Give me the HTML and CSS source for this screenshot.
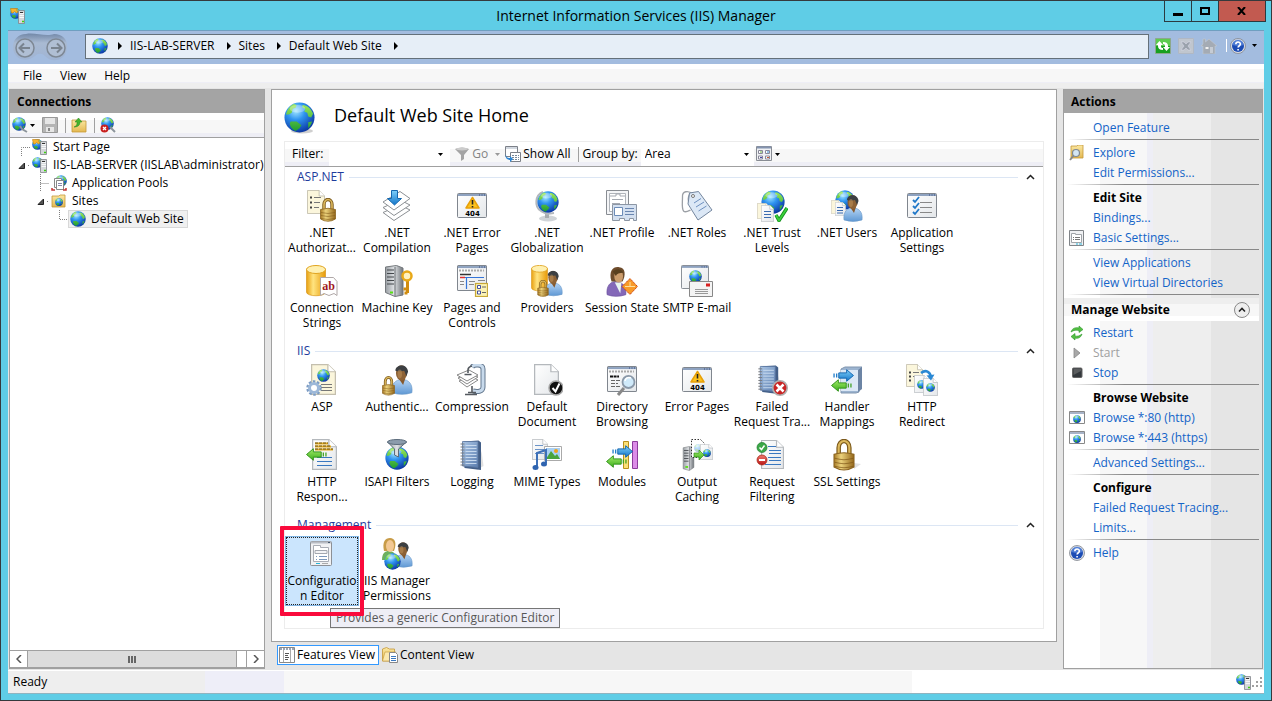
FILE: index.html
```html
<!DOCTYPE html>
<html lang="en">
<head>
    <meta charset="UTF-8">
    <meta name="viewport" content="width=device-width, initial-scale=1.0">
    <title>Internet Information Services (IIS) Manager</title>
    <link rel="stylesheet" href="styles.css">
</head>
<body>

    <!-- Icon definitions -->
    <svg class="sprite" aria-hidden="true">
        <defs>
            <radialGradient id="gGlobe" cx="38%" cy="28%" r="75%">
                <stop offset="0" stop-color="#a4e8ff"/><stop offset=".4" stop-color="#2f94f0"/><stop offset="1" stop-color="#0a34a0"/>
            </radialGradient>
            <linearGradient id="gLand" x1="0" y1="0" x2="0" y2="1">
                <stop offset="0" stop-color="#9ae85a"/><stop offset="1" stop-color="#1f9c30"/>
            </linearGradient>
            <linearGradient id="gGold" x1="0" y1="0" x2="1" y2="0">
                <stop offset="0" stop-color="#a87a24"/><stop offset=".35" stop-color="#ecd27c"/><stop offset="1" stop-color="#94671a"/>
            </linearGradient>
            <linearGradient id="gDb" x1="0" y1="0" x2="1" y2="0">
                <stop offset="0" stop-color="#e8a010"/><stop offset=".35" stop-color="#ffe480"/><stop offset="1" stop-color="#e89a08"/>
            </linearGradient>
            <linearGradient id="gTower" x1="0" y1="0" x2="1" y2="0">
                <stop offset="0" stop-color="#9a9fa4"/><stop offset=".5" stop-color="#dfe2e5"/><stop offset="1" stop-color="#70757a"/>
            </linearGradient>
            <linearGradient id="gBlue" x1="0" y1="0" x2="0" y2="1">
                <stop offset="0" stop-color="#7fd0fa"/><stop offset="1" stop-color="#1274c8"/>
            </linearGradient>
            <linearGradient id="gGreen" x1="0" y1="0" x2="0" y2="1">
                <stop offset="0" stop-color="#a4ec6a"/><stop offset="1" stop-color="#3cae1c"/>
            </linearGradient>
            <linearGradient id="gShirt" x1="0" y1="0" x2="0" y2="1">
                <stop offset="0" stop-color="#b4d4f4"/><stop offset="1" stop-color="#5f98d4"/>
            </linearGradient>
            <linearGradient id="gBook" x1="0" y1="0" x2="1" y2="1">
                <stop offset="0" stop-color="#a9c4e4"/><stop offset="1" stop-color="#5c7fb0"/>
            </linearGradient>
            <linearGradient id="gFolder" x1="0" y1="0" x2="0" y2="1">
                <stop offset="0" stop-color="#fbe9a4"/><stop offset="1" stop-color="#e4b850"/>
            </linearGradient>
            <linearGradient id="gRed" x1="0" y1="0" x2="0" y2="1">
                <stop offset="0" stop-color="#f07a70"/><stop offset="1" stop-color="#b81414"/>
            </linearGradient>
            <linearGradient id="gPage" x1="0" y1="0" x2="1" y2="1">
                <stop offset="0" stop-color="#ffffff"/><stop offset="1" stop-color="#e4e7ea"/>
            </linearGradient>
            <linearGradient id="gNav" x1="0" y1="0" x2="0" y2="1">
                <stop offset="0" stop-color="#7288a8"/><stop offset=".35" stop-color="#a9bad2"/><stop offset="1" stop-color="#9fb4d4"/>
            </linearGradient>
        </defs>

        <!-- shared parts -->
        <symbol id="globe" viewBox="0 0 32 32">
            <circle cx="16" cy="16" r="15.500" fill="url(#gGlobe)"/>
            <path d="M2 13C3 8 6 4 10 2l3 1-1 3-3 1-1 4-3 2zM19 3c5 0 9 4 11 9l-2 4-3-1-1-4-3-1 1-3-3-1zM7 20l6 0 5 4-2 3-4 3c-4-2-6-5-6-8zM25 21l4-1c-1 3-2 5-4 7z" fill="url(#gLand)"/>
            <ellipse cx="14" cy="7" rx="8" ry="4" fill="#fff" opacity=".3"/>
        </symbol>
        <symbol id="page" viewBox="0 0 20 26" preserveAspectRatio="none">
            <path d="M.5.5h13l6 6v19H.5z" fill="url(#gPage)" stroke="#b4b8bc"/>
            <path d="M13.500.5v6h6" fill="#fff" stroke="#b4b8bc"/>
        </symbol>
        <symbol id="cream" viewBox="0 0 20 26" preserveAspectRatio="none">
            <path d="M.5.5h13l6 6v19H.5z" fill="#fbf6dc" stroke="#c4bfae"/>
            <path d="M13.500.5v6h6" fill="#fff" stroke="#c4bfae"/>
        </symbol>
        <symbol id="lock" viewBox="0 0 16 24">
            <path d="M4 12V6.500a4 5 0 0 1 8 0V12" fill="none" stroke="#7c5a1c" stroke-width="3.400"/>
            <path d="M4 12V6.500a4 5 0 0 1 8 0V12" fill="none" stroke="#dcb85c" stroke-width="1.600"/>
            <path d="M.5 11.500Q8 9 15.500 11.500V21Q8 25.500.5 21z" fill="url(#gGold)" stroke="#8c6420" stroke-width=".8"/>
            <path d="M1 14.500q7 2 14 0M1 17.500q7 2 14 0M1 20.500q7 2 14 0" fill="none" stroke="#80591a" stroke-width=".8" opacity=".7"/>
        </symbol>
        <symbol id="user" viewBox="0 0 20 28">
            <path d="M1 26c-1-8 3-12 9-12s10 4 9 12q-9 3-18 0z" fill="url(#gShirt)" stroke="#6a98c8" stroke-width=".6"/>
            <path d="M7 13h6l-2 6z" fill="#86592e"/>
            <ellipse cx="9.500" cy="8" rx="5" ry="7" fill="#8d6236"/>
            <path d="M4 6C4 0 15-1 15.500 7l-1.500 4-2-5q-5 1-8 0z" fill="#3c3f42"/>
            <ellipse cx="8" cy="9" rx="2" ry="4" fill="#c4965c" opacity=".5"/>
        </symbol>
        <symbol id="woman" viewBox="0 0 20 28">
            <path d="M1 26c-1-8 3-12 8-12s10 4 9 12q-9 3-17 0z" fill="#8468b8" stroke="#6a509c" stroke-width=".6"/>
            <path d="M8 15h6l-1 10z" fill="#e8f4f0"/>
            <path d="M5 14C2 4 7 0 12 1c6 0 6 8 3 13z" fill="#6e4c2c"/>
            <ellipse cx="11.500" cy="9" rx="4" ry="6" fill="#cb9c6c"/>
            <path d="M6 5q6-5 10 1-6 0-7 3z" fill="#59401f"/>
        </symbol>
        <symbol id="window" viewBox="0 0 30 25" preserveAspectRatio="none">
            <rect x=".5" y=".5" width="29" height="24" rx="1" fill="url(#gPage)" stroke="#80868e"/>
            <path d="M1 1h28v2H1z" fill="#8ea2c0"/>
            <path d="M22 2h1m1.500 0h1m1.500 0h1" stroke="#34487a"/>
        </symbol>
        <symbol id="arrow-r" viewBox="0 0 20 12">
            <path d="M1 4v4M3.500 4v4" stroke="#1a78c8" stroke-width="1.200"/>
            <path d="M5.500 3.500H13v-3L19.500 6 13 11.500v-3H5.500z" fill="url(#gBlue)" stroke="#0f64b0" stroke-width=".9"/>
        </symbol>
        <symbol id="arrow-l" viewBox="0 0 20 12">
            <path d="M19 4v4M16.500 4v4" stroke="#3fa020" stroke-width="1.200"/>
            <path d="M14.500 3.500H7v-3L.5 6 7 11.500v-3h7.500z" fill="url(#gGreen)" stroke="#2f9218" stroke-width=".9"/>
        </symbol>
        <symbol id="tower" viewBox="0 0 14 28">
            <path d="M1 2l7-1.500L13 2v22l-5 3.500-7-2z" fill="url(#gTower)" stroke="#74787c" stroke-width=".6"/>
            <path d="M8 1v26" stroke="#686c70" stroke-width=".7"/>
            <path d="M2 5h5M2 8h5M2 11h5M2 14h5M2 17h5" stroke="#44484c"/>
            <path d="M3.500 23.500h3" stroke="#56e010" stroke-width="2"/>
        </symbol>
        <symbol id="book" viewBox="0 0 24 32">
            <path d="M22 12l2 15-7 4z" fill="#999" opacity=".3"/>
            <path d="M4 2.500l15-1 2.500 2V31L5 29z" fill="#435f88"/>
            <path d="M3 2.500h15.500v26L3 27z" fill="url(#gBook)" stroke="#5a76a0" stroke-width=".8"/>
            <path d="M6 6.500h11M6 9.500h11M6 12.500h11M6 15.500h11M6 18.500h11M6 21.500h11M6 24.500h11" stroke="#cfe0f2" stroke-width=".9"/>
            <path d="M1 5h4M1 8h4M1 11h4M1 14h4M1 17h4M1 20h4M1 23h4M1 26h4" stroke="#777a7e"/>
        </symbol>
        <symbol id="server" viewBox="0 0 16 16">
            <use href="#globe" x="0" y="0" width="11" height="11"/>
            <path d="M8.500 2.500h6v13h-6z" fill="#d4d7da" stroke="#80848a" stroke-width=".8"/>
            <path d="M9.500 5.500H14M9.500 7.500H14M9.500 9.500H14" stroke="#fff" stroke-width=".8"/>
            <path d="M10 4.500h3" stroke="#333"/>
            <path d="M12 13.500h2" stroke="#3ed010" stroke-width="1.500"/>
        </symbol>
        <symbol id="start" viewBox="0 0 16 16">
            <use href="#server" width="16" height="16"/>
            <path d="M.5.5h7L6.500 2 8 4 6.500 5 4.500 3.500 3 5H1.500z" fill="#f7b42c" stroke="#c07808" stroke-width=".6"/>
        </symbol>
        <symbol id="help" viewBox="0 0 16 16">
            <circle cx="8" cy="8" r="7.500" fill="#d8dce4" stroke="#80858e" stroke-width=".8"/>
            <circle cx="8" cy="8" r="6" fill="#1c4cb4"/>
            <path d="M2.500 7a5.500 5.500 0 0 1 11 0q-5 2-11 0z" fill="#6c9ae8" opacity=".6"/>
            <path d="M5.800 6.300c0-3 4.600-3 4.600-.2 0 1.700-2.300 1.600-2.300 3.500M8.100 11v1.600" fill="none" stroke="#fff" stroke-width="1.600"/>
        </symbol>
        <symbol id="site-window" viewBox="0 0 16 14">
            <path d="M.5.5h15v12H.5z" fill="#fff" stroke="#888"/>
            <path d="M1 1h14v2H1z" fill="#a8b4c8"/>
            <use href="#globe" x="4" y="4" width="8" height="8"/>
        </symbol>

        <!-- feature icons -->
        <symbol id="f-auth-rules" viewBox="0 0 32 32">
            <use href="#cream" x="1" y="0" width="18" height="24"/>
            <path d="M4 7.500h2M4 12.500h2M4 17.500h2" stroke="#444" stroke-width="2"/>
            <path d="M8 7.500h7M8 12.500h6M8 17.500h5" stroke="#777"/>
            <use href="#lock" x="14" y="8" width="16" height="24"/>
        </symbol>
        <symbol id="f-compile" viewBox="0 0 32 32">
            <g fill="#fff" stroke="#8c9094">
                <path d="M2 22.500l17-7.500 10 5-16 10.500z"/>
                <path d="M2 17.500l17-7.500 10 5-16 10.500z"/>
                <path d="M2 12L19 1.500l10 7L13 20z"/>
            </g>
            <path d="M10.500.5h6v8h4L13.500 15l-7-6.500h4z" fill="url(#gBlue)" stroke="#1568b0"/>
        </symbol>
        <symbol id="f-404" viewBox="0 0 32 32">
            <use href="#window" x="1" y="3" width="30" height="25"/>
            <path d="M16.500 7.500L23 18H10z" fill="#fcc21c" stroke="#e8a008" stroke-linejoin="round" stroke-width="1.500"/>
            <path d="M16.500 10v4.500M16.500 16v1.500" stroke="#222" stroke-width="1.600"/>
        </symbol>
        <symbol id="f-global" viewBox="0 0 32 32">
            <ellipse cx="17" cy="28.500" rx="9" ry="3" fill="#d0d4d8"/>
            <path d="M14 23h4v5h-4z" fill="#a8acb0"/>
            <path d="M12 2C4 5 3 17 10 21l6 3 7-1" fill="none" stroke="#b4b8bc" stroke-width="2"/>
            <use href="#globe" x="6" y="1" width="22" height="22"/>
        </symbol>
        <symbol id="f-profile" viewBox="0 0 32 32">
            <path d="M.5.5h22v24H.5z" fill="#f4f5f7" stroke="#888c92"/>
            <path d="M3.500 3.500h16v18h-16z" fill="#fff" stroke="#b0b4ba"/>
            <path d="M4 6h6V4h4v2h5M6 9.500h11M6 13.500h8" fill="none" stroke="#a4a8b0"/>
            <path d="M6.500 14.500h24v16h-3v-2h-4v2h-5v-2h-5v2h-7z" fill="#d4e0f0" stroke="#8c96a4"/>
            <path d="M8.500 17.500h8v8h-8z" fill="#fff" stroke="#6c8cb8"/>
            <path d="M19 18.500h9M19 21.500h9M19 24.500h9" stroke="#6a86b0"/>
        </symbol>
        <symbol id="f-roles" viewBox="0 0 32 32">
            <path d="M12 4C7 0 1 1 1.500 7c0 6-1 11 1 14 2 2 5 0 7-1M12 4C9 1 6 7 8 13" fill="none" stroke="#9ca0a6" stroke-width="1.300"/>
            <path d="M8.500 3l9-1.500L31 20 17 30 7 14z" fill="#dce8f6" stroke="#74869e"/>
            <circle cx="12" cy="6" r="1.500" fill="#fff" stroke="#777"/>
            <path d="M13 13l7-4.500M15 17l8-5M17.500 21l8-5" stroke="#6e90c0"/>
        </symbol>
        <symbol id="f-trust" viewBox="0 0 32 32">
            <use href="#globe" x="5" y="0" width="24" height="24"/>
            <use href="#cream" x="1" y="13" width="13" height="16"/>
            <use href="#page" x="5" y="15" width="13" height="17"/>
            <path d="M8 21.500h7M8 24.500h7M8 27.500h7" stroke="#3a6cb0"/>
            <path d="M20 25l3 5.500L31 18" fill="none" stroke="#12901c" stroke-width="3.500"/>
            <path d="M20 25l3 5.500L31 18" fill="none" stroke="#3cd03c" stroke-width="1.800"/>
        </symbol>
        <symbol id="f-users" viewBox="0 0 32 32">
            <use href="#globe" x="4" y="0" width="20" height="20"/>
            <use href="#cream" x="0" y="10" width="11" height="14"/>
            <use href="#page" x="4" y="12" width="11" height="14"/>
            <path d="M6 17.500h6M6 20.500h6M6 23h6" stroke="#3a6cb0"/>
            <use href="#user" x="12" y="4" width="20" height="28"/>
        </symbol>
        <symbol id="f-appset" viewBox="0 0 32 32">
            <use href="#window" x="1" y="3" width="30" height="25"/>
            <path d="M7 10l2 2 4-5M7 16l2 2 4-5M7 22l2 2 4-5" fill="none" stroke="#2078c8" stroke-width="1.800"/>
            <path d="M14 12.500h12M14 17.500h12M14 22.500h12" stroke="#888"/>
        </symbol>
        <symbol id="db" viewBox="0 0 20 32">
            <path d="M.5 4v23c0 5 19 5 19 0V4z" fill="url(#gDb)" stroke="#d48c08" stroke-width=".6"/>
            <ellipse cx="10" cy="4.500" rx="9.500" ry="4" fill="#fff0b0" stroke="#e0a420"/>
        </symbol>
        <symbol id="f-conn" viewBox="0 0 32 32">
            <use href="#db" x="0" y="0" width="20" height="32"/>
            <path d="M14.500 12.500h13l3.500 4v14l-3-2-5 2-5-2-3.500 2z" fill="#fff" stroke="#b0a8a8"/>
        </symbol>
        <symbol id="f-key" viewBox="0 0 32 32">
            <path d="M4.500 2l11-1.500L22 3v27l-8 1.500-9.500-4z" fill="url(#gTower)" stroke="#74787c"/>
            <path d="M14 2v29" stroke="#686c70"/>
            <path d="M6 5h7M6 8.500h7M6 12h7M6 15.500h7M6 19h7" stroke="#44484c" stroke-width="1.200"/>
            <path d="M9 27.500h3" stroke="#56e010" stroke-width="2"/>
            <path d="M26.500 15v13M26.500 24h-4M26.500 28h-3" fill="none" stroke="#d08c10" stroke-width="3"/>
            <circle cx="26" cy="11" r="4.500" fill="#fff2c0" stroke="#e8a818" stroke-width="2.500"/>
        </symbol>
        <symbol id="f-pages" viewBox="0 0 32 32">
            <use href="#window" x="1" y="0" width="30" height="26"/>
            <path d="M3 5.500h25" stroke="#aaa" stroke-width="2" stroke-dasharray="2 1"/>
            <path d="M4 9.500h11" stroke="#333" stroke-width="1.500"/>
            <path d="M4 12.500h24M10.500 13v11" stroke="#3474d8" stroke-width="1.200"/>
            <path d="M4 12.500h5" stroke="#e03030" stroke-width="1.500"/>
            <path d="M4 16.500h4M4 19.500h4M13 16.500h6M13 19.500h5M22 15.500h7" stroke="#888"/>
            <rect x="19.500" y="18.500" width="12" height="13" fill="#fbf2b4" stroke="#c8a838" stroke-width="1.200"/>
            <path d="M21.500 20.500h3v3h-3zM21.500 26h3v3h-3z" fill="#fff" stroke="#4450a0"/>
            <path d="M26 22h4M26 27.500h4" stroke="#666"/>
        </symbol>
        <symbol id="f-providers" viewBox="0 0 32 32">
            <use href="#db" x="0" y="0" width="17" height="27"/>
            <use href="#user" x="13" y="4" width="19" height="28"/>
            <use href="#lock" x="6" y="15" width="12" height="17"/>
        </symbol>
        <symbol id="f-session" viewBox="0 0 32 32">
            <use href="#woman" x="0" y="1" width="22" height="31"/>
            <path d="M24 13.500l7.500 8-7.500 8-8-8z" fill="#f89a28" stroke="#c83c10" stroke-dasharray="1.500 .7"/>
            <path d="M19 21.500h10M24 17v4" stroke="#ffe0a0"/>
        </symbol>
        <symbol id="f-smtp" viewBox="0 0 32 32">
            <use href="#window" x="0" y="0" width="28" height="24"/>
            <use href="#globe" x="8" y="5" width="13" height="13"/>
            <path d="M8.500 16.500h23v15h-23z" fill="#f4f4f4" stroke="#888"/>
            <path d="M25 18.500h4v3h-4z" fill="#d82020"/>
            <path d="M14 24.500h13M14 26.500h13M14 28.500h13" stroke="#999"/>
        </symbol>
        <symbol id="f-asp" viewBox="0 0 32 32">
            <use href="#cream" x="5" y="0" width="25" height="31"/>
            <use href="#globe" x="11" y="5" width="13" height="13"/>
            <path d="M15 20.500h11M15 23.500h11M15 26.500h11" stroke="#777" stroke-width="1.200"/>
            <circle cx="8" cy="24" r="6.500" fill="none" stroke="#7c9cc4" stroke-width="2.500" stroke-dasharray="2.500 1.600"/>
            <circle cx="8" cy="24" r="4.500" fill="#fff" stroke="#9db8d8" stroke-width="3"/>
        </symbol>
        <symbol id="f-authn" viewBox="0 0 32 32">
            <use href="#user" x="10" y="0" width="22" height="31"/>
            <use href="#lock" x="1" y="12" width="13" height="20"/>
        </symbol>
        <symbol id="f-compress" viewBox="0 0 32 32">
            <path d="M16 3c2-3 11-3 11 2v18c0 5-6 5-10 4" fill="none" stroke="#64788e" stroke-width="5"/>
            <path d="M16 3c2-3 11-3 11 2v18c0 5-6 5-10 4" fill="none" stroke="#c8daec" stroke-width="3"/>
            <g fill="#fff" stroke="#888">
                <path d="M3 17l11-5 8 4-11 7z"/>
                <path d="M2 14l12-5 8 4-11 7z"/>
                <path d="M1 11l12-5 9 5-11 6z"/>
            </g>
            <path d="M16 2q-4 1-4 4v3M8.500 10.500h7M16 22v7M9 30.500h12M12 28.500h8" fill="none" stroke="#555a60" stroke-width="1.600"/>
        </symbol>
        <symbol id="f-default" viewBox="0 0 32 32">
            <use href="#page" x="3" y="0" width="25" height="31"/>
            <circle cx="25" cy="24" r="7" fill="#111" stroke="#a8a8a8" stroke-width="1.500"/>
            <path d="M21.500 24l3 3.500 4-8" fill="none" stroke="#fff" stroke-width="2"/>
        </symbol>
        <symbol id="f-browse" viewBox="0 0 32 32">
            <use href="#window" x="1" y="2" width="30" height="26"/>
            <path d="M3 7.500h25" stroke="#a8a8a8" stroke-width="2" stroke-dasharray="2 1"/>
            <path d="M4 12.500h9" stroke="#111" stroke-width="2" stroke-dasharray="3 .6"/>
            <path d="M5 16.500h9M5 19.500h7M5 22.500h9" stroke="#666" stroke-dasharray="4 1"/>
            <path d="M18 24l-6 7" stroke="#888" stroke-width="3"/>
            <circle cx="22.500" cy="18" r="6" fill="#d0eafa" stroke="#8a98a8" stroke-width="1.800"/>
            <path d="M19 17a4 4 0 0 1 6-3" fill="none" stroke="#fff" stroke-width="1.500"/>
        </symbol>
        <symbol id="f-failed" viewBox="0 0 32 32">
            <use href="#book" x="1" y="0" width="24" height="31"/>
            <circle cx="24" cy="24" r="7.200" fill="#c82424" stroke="#b0b0b0" stroke-width="1.600"/>
            <path d="M20.500 20.500l7 7M27.500 20.500l-7 7" stroke="#fff" stroke-width="2.500"/>
        </symbol>
        <symbol id="f-handler" viewBox="0 0 32 32">
            <path d="M10 5l4-2h17l-3 3v22l-3 1H10z" fill="#9cb4d0" stroke="#8096b0"/>
            <path d="M10 6h17v21H10z" fill="#dce8f6"/>
            <path d="M27 6l4-3v22l-4 3z" fill="#6c84a4"/>
            <use href="#arrow-r" x="2" y="5" width="21" height="13"/>
            <use href="#arrow-l" x="0" y="15" width="21" height="13"/>
        </symbol>
        <symbol id="f-redirect" viewBox="0 0 32 32">
            <use href="#cream" x="0" y="0" width="17" height="23"/>
            <path d="M3 8.500h2M3 12.500h2M3 16.500h2" stroke="#444" stroke-width="2"/>
            <path d="M7 8.500h6M7 12.500h3" stroke="#777"/>
            <use href="#page" x="8" y="11" width="15" height="18"/>
            <use href="#globe" x="11" y="16" width="9" height="9"/>
            <use href="#page" x="17" y="14" width="15" height="18"/>
            <use href="#globe" x="20" y="19" width="9" height="9"/>
            <path d="M15 9c5-4 9-1 10 4" fill="none" stroke="#2a88d4" stroke-width="2.500"/>
            <path d="M20.500 11.500l8-1-3.500 6z" fill="#2a88d4"/>
        </symbol>
        <symbol id="f-response" viewBox="0 0 32 32">
            <use href="#page" x="6" y="0" width="25" height="31"/>
            <path d="M9 4.500h13M9 7.500h16M9 10.500h18" stroke="#e4ac20" stroke-width="2"/>
            <path d="M9 4h13M9 7h16M9 10h18" stroke="#4c3c10" stroke-dasharray="3 1" stroke-width=".8"/>
            <path d="M11 18.500h15M11 22.500h15M11 26.500h15" stroke="#3a78c0" stroke-width="1.200"/>
            <use href="#arrow-l" x="0" y="9" width="21" height="13"/>
        </symbol>
        <symbol id="f-isapi" viewBox="0 0 32 32">
            <use href="#globe" x="4" y="7" width="24" height="24"/>
            <path d="M6.500 3l7 7v6l4 2v-8l8-7z" fill="url(#gTower)" stroke="#5c6c7c"/>
            <ellipse cx="16" cy="3" rx="9.500" ry="2.500" fill="#8c9cac" stroke="#5c6c7c"/>
        </symbol>
        <symbol id="f-logging" viewBox="0 0 32 32">
            <use href="#book" x="3" y="0" width="25" height="32"/>
        </symbol>
        <symbol id="f-mime" viewBox="0 0 32 32">
            <use href="#page" x="1" y="0" width="16" height="21"/>
            <path d="M4 6.500h8M4 10.500h10M4 14.500h9" stroke="#6c94c8"/>
            <path d="M13.500 7.500h17v14h-17z" fill="#fff" stroke="#aaa"/>
            <path d="M15 9h14v11H15z" fill="#a8d0f4"/>
            <path d="M15 20l5-8 4 5 2-2 3 5z" fill="#48a43c"/>
            <circle cx="25" cy="12" r="2" fill="#f0a018"/>
            <path d="M6 28V14l9-3v13" fill="none" stroke="#3c70b8" stroke-width="2"/>
            <ellipse cx="4.500" cy="28.500" rx="3" ry="2.500" fill="#2f64b0"/>
            <ellipse cx="13" cy="25" rx="3" ry="2.500" fill="#2f64b0"/>
        </symbol>
        <symbol id="f-modules" viewBox="0 0 32 32">
            <path d="M17.500 2.500h5v27h-5z" fill="#fbe078" stroke="#b8901c"/>
            <path d="M26.500 2.500h5v27h-5z" fill="#dc8ce8" stroke="#8c3c9c"/>
            <use href="#arrow-r" x="6" y="6" width="21" height="13"/>
            <use href="#arrow-l" x="0" y="16" width="21" height="13"/>
        </symbol>
        <symbol id="f-caching" viewBox="0 0 32 32">
            <use href="#tower" x="0" y="7" width="15" height="25"/>
            <path d="M10.500.5h9l4 4v14h-13z" fill="#fff" stroke="#333" stroke-dasharray="1.500 1.500"/>
            <use href="#globe" x="13" y="5" width="8" height="8" opacity=".35"/>
            <use href="#page" x="19" y="5" width="13" height="16"/>
            <use href="#globe" x="22" y="10" width="8" height="8"/>
            <path d="M13 14h5v-3l5 5-5 5v-3h-5z" fill="url(#gGreen)" stroke="#2f9218" stroke-width=".7"/>
        </symbol>
        <symbol id="f-filter" viewBox="0 0 32 32">
            <use href="#page" x="5" y="1" width="23" height="29"/>
            <path d="M12 7.500h8M13 11.500h12M13 14.500h12M12 18.500h13M13 21.500h12M9 25.500h16" stroke="#3a78c0" stroke-width="1.200"/>
            <circle cx="6" cy="8.500" r="5" fill="#3ca848" stroke="#1c7c2c" stroke-width=".7"/>
            <path d="M3.500 8.500l2 2 3-4" fill="none" stroke="#fff" stroke-width="1.500"/>
            <circle cx="6" cy="21" r="5" fill="url(#gRed)" stroke="#a02010" stroke-width=".7"/>
            <path d="M3 21h6" stroke="#fff" stroke-width="2"/>
        </symbol>
        <symbol id="f-ssl" viewBox="0 0 32 32">
            <path d="M23 24l7 1-7 5z" fill="#999" opacity=".3"/>
            <use href="#lock" x="2" y="0" width="22" height="32"/>
        </symbol>
        <symbol id="f-config" viewBox="0 0 32 32">
            <rect x="4.500" y="3.500" width="21" height="24" rx="1" fill="#f0f1f3" stroke="#8c9096"/>
            <path d="M5 4.500h20" stroke="#b8bcc4" stroke-width="2"/>
            <path d="M22 4.500h2" stroke="#44586c"/>
            <path d="M7.500 7.500h7v2h8v14h-15z" fill="#fff" stroke="#a8acb4"/>
            <path d="M9 12.500h12v3H9z" fill="#f4f4f6" stroke="#a4a8b0"/>
            <path d="M10 18.500h1M13 18.500h8M10 21.500h1M13 21.500h8" stroke="#7c98bc"/>
            <path d="M10 25.500h4" stroke="#28b4d8"/><path d="M16 25.500h6" stroke="#aaa"/>
        </symbol>
        <symbol id="f-perms" viewBox="0 0 32 32">
            <use href="#user" x="13" y="3" width="19" height="27"/>
            <path d="M1 22c0-7 3-9 7-9s8 3 7 9z" fill="#6cb05c"/>
            <path d="M3 13C1 4 4 0 9 0s7 5 4 13z" fill="#c89c48"/>
            <ellipse cx="9" cy="8" rx="4" ry="6" fill="#f2c894"/>
            <use href="#globe" x="3" y="15" width="17" height="17"/>
        </symbol>
    </svg>

    <div class="window">
        <header class="titlebar">
            <svg class="icon16 app-icon"><use href="#start"/></svg>
            <h1 class="window-title">Internet Information Services (IIS) Manager</h1>
            <div class="window-buttons">
                <button class="win-btn" aria-label="Minimize"><svg width="10" height="10"><path d="M0 7h10v3H0z"/></svg></button>
                <button class="win-btn" aria-label="Maximize"><svg width="10" height="10"><path d="M1 2h8v6H1z" fill="none" stroke="#000" stroke-width="2"/></svg></button>
                <button class="win-btn win-close" aria-label="Close"><svg width="10" height="8"><path d="M1 0l7 8M8 0L1 8" stroke="#000" stroke-width="2"/></svg></button>
            </div>
        </header>

        <nav class="navbar" aria-label="Location">
            <svg class="history" viewBox="0 0 56 28">
                <path d="M14 1c8-2 20 3 28 0 9 0 14 6 13 14-1 14-16 15-22 8-3-3-7-3-10 0C15 30 1 27 1 14 1 7 6 1 14 1z" fill="url(#gNav)"/>
                <circle cx="13" cy="15" r="9" fill="#b0bfd4" stroke="#7e8894" stroke-width="1.500"/>
                <circle cx="44" cy="15" r="9" fill="#b0bfd4" stroke="#7e8894" stroke-width="1.500"/>
                <path d="M18 15H8m4-4.500L7.500 15l4.500 4.500M39 15h10m-4-4.500l4.500 4.500-4.500 4.500" fill="none" stroke="#79838f" stroke-width="2"/>
            </svg>
            <div class="address">
                <svg class="icon16"><use href="#globe"/></svg>
                <svg class="crumb-arrow" viewBox="0 0 4 8"><path d="M0 0l4 4-4 4z"/></svg>
                <a href="#">IIS-LAB-SERVER</a>
                <svg class="crumb-arrow" viewBox="0 0 4 8"><path d="M0 0l4 4-4 4z"/></svg>
                <a href="#">Sites</a>
                <svg class="crumb-arrow" viewBox="0 0 4 8"><path d="M0 0l4 4-4 4z"/></svg>
                <a href="#">Default Web Site</a>
                <svg class="crumb-arrow" viewBox="0 0 4 8"><path d="M0 0l4 4-4 4z"/></svg>
            </div>
            <div class="nav-tools">
                <button aria-label="Refresh"><svg class="icon16" viewBox="0 0 16 16"><path d="M.5.500h15v15H.5z" fill="#5ccc50" stroke="#8ca88c"/><path d="M1 8h14v7H1z" fill="#18a020"/><path d="M4.500 3L8 7H6v1.500q0 1.500 2 1.500v2q-5 0-5-4V7H1zM11.500 13L8 9h2V7.500Q10 6 8 6V4q5 0 5 4v1h2z" fill="#fff"/></svg></button>
                <button aria-label="Stop loading" disabled><svg class="icon16" viewBox="0 0 16 16"><path d="M.5.500h15v15H.5z" fill="#c0c6ce" stroke="#b0b8c4"/><path d="M3 4l3 0 2 2 2-2h3L10 8l3 4h-3L8 10l-2 2H3l3-4z" fill="#9aa2ac" stroke="#dde" stroke-width=".5"/></svg></button>
                <button aria-label="Home" disabled><svg class="icon16" viewBox="0 0 16 16"><path d="M2 1h2.500v3L8 1l8 7h-2v8H2V8H0l2-2z" fill="#a4abb4" stroke="#c4cad2" stroke-width=".6"/><path d="M4.500 9h3v2h-3z" fill="#f0f0f0"/><path d="M9 9h3v6H9z" fill="#c6ccd4"/></svg></button>
                <span class="nav-sep"></span>
                <button class="help-btn" aria-label="Help"><svg class="icon16"><use href="#help"/></svg><svg class="caret" viewBox="0 0 5 3"><path d="M0 0h5L2.500 3z"/></svg></button>
            </div>
        </nav>

        <nav class="menubar" aria-label="Menu">
            <button>File</button>
            <button>View</button>
            <button>Help</button>
        </nav>

        <div class="workspace">
            <section class="connections">
                <h2 class="pane-title">Connections</h2>
                <div class="conn-tools">
                    <button class="connect-btn" aria-label="Connect"><svg class="icon16" viewBox="0 0 16 16"><use href="#globe" width="14" height="14"/><path d="M8 9l2 3 5 3" fill="none" stroke="#8c949c" stroke-width="2"/></svg><svg class="caret" viewBox="0 0 5 3"><path d="M0 0h5L2.500 3z"/></svg></button>
                    <button aria-label="Save" disabled><svg class="icon16" viewBox="0 0 16 16"><path d="M.5.500h15v15H.5z" fill="#b4b4b4" stroke="#999"/><path d="M3 1h10v6H3zM4 10h8v5H4z" fill="#e6e6e6"/><path d="M6 11h2v3H6z" fill="#888"/></svg></button>
                    <span class="tool-sep"></span>
                    <button aria-label="Up"><svg class="icon16" viewBox="0 0 16 16"><path d="M1 3h5l1 1h8v11H1z" fill="url(#gFolder)" stroke="#c49838" stroke-width=".8"/><path d="M3 10c3-1 3-3 3-5H4l3.500-4L11 5H9c0 3-2 5-6 5z" fill="#44b42c" stroke="#24801c" stroke-width=".5"/></svg></button>
                    <span class="tool-sep"></span>
                    <button aria-label="Disconnect"><svg class="icon16" viewBox="0 0 16 16"><use href="#globe" x="1" width="13" height="13"/><path d="M10 10l5 5" stroke="#8c949c" stroke-width="2"/><circle cx="4.500" cy="11.500" r="4" fill="#c82020"/><path d="M3 10l3 3M6 10l-3 3" stroke="#fff" stroke-width="1.300"/></svg></button>
                </div>
                <ul class="tree">
                    <li class="tree-row level1">
                        <svg class="branch" viewBox="0 0 13 18"><path d="M4.500 18V9.500H13" class="dots"/></svg>
                        <span class="node"><svg class="icon16"><use href="#start"/></svg>Start Page</span>
                    </li>
                    <li class="tree-row level1">
                        <svg class="branch" viewBox="0 0 13 18"><path d="M7.500 7v5.500H2z" class="expander"/><path d="M11 9.500h2" class="dots"/></svg>
                        <span class="node"><svg class="icon16"><use href="#server"/></svg>IIS-LAB-SERVER (IISLAB\administrator)</span>
                    </li>
                    <li class="tree-row level2">
                        <svg class="branch" viewBox="0 0 13 18"><path d="M4.500 0v18M4.500 9.500H13" class="dots"/></svg>
                        <span class="node"><svg class="icon16" viewBox="0 0 16 16"><use href="#globe" x="4" y="0" width="12" height="12"/><path d="M3.500 3.500h7v9h-7z" fill="#fff" stroke="#888"/><path d="M5.500 5.500h7v9h-7z" fill="#fff" stroke="#888"/><path d="M7 8.500h4M7 10.500h4" stroke="#88a"/><path d="M1 13v2h3M12 15h3v-2" fill="none" stroke="#c43434" stroke-width="1.500"/></svg>Application Pools</span>
                    </li>
                    <li class="tree-row level2">
                        <svg class="branch" viewBox="0 0 13 18"><path d="M7.500 7v5.500H2z" class="expander"/><path d="M11 9.500h2" class="dots"/></svg>
                        <span class="node"><svg class="icon16" viewBox="0 0 16 16"><path d="M1 3h7l1-1h5v12H1z" fill="url(#gFolder)" stroke="#c49838" stroke-width=".8"/><use href="#globe" x="4" y="5" width="8" height="8"/></svg>Sites</span>
                    </li>
                    <li class="tree-row level3">
                        <svg class="branch" viewBox="0 0 13 18"><path d="M4.500 0v9.500H13" class="dots"/></svg>
                        <span class="node selected"><svg class="icon16"><use href="#globe"/></svg>Default Web Site</span>
                    </li>
                </ul>
                <div class="scrollbar">
                    <button aria-label="Scroll left"><svg width="6" height="8"><path d="M5 0L1 4l4 4" class="chev"/></svg></button>
                    <div class="track"><div class="thumb"><span></span><span></span><span></span></div></div>
                    <button aria-label="Scroll right"><svg width="6" height="8"><path d="M1 0l4 4-4 4" class="chev"/></svg></button>
                </div>
            </section>

            <main class="center">
                <div class="feature-page">
                    <div class="page-head">
                        <svg class="icon32" viewBox="0 0 32 32"><ellipse cx="18" cy="29" rx="11" ry="2.500" fill="#888" opacity=".4"/><use href="#globe" width="31" height="31"/></svg>
                        <h2>Default Web Site Home</h2>
                    </div>
                    <div class="feature-box">
                        <div class="filter-bar">
                            <label for="filter">Filter:</label>
                            <div class="combo filter-combo">
                                <input type="text" id="filter">
                                <svg class="caret" viewBox="0 0 5 3"><path d="M0 0h5L2.500 3z"/></svg>
                            </div>
                            <button class="go-btn" disabled><svg class="icon16" viewBox="0 0 16 16"><path d="M1 3q7-3 14 0l-5 6v4l-3 2V9z" fill="#a4a4a4"/><ellipse cx="8" cy="3" rx="6" ry="1.500" fill="#ccc"/></svg>Go<svg class="caret" viewBox="0 0 5 3"><path d="M0 0h5L2.500 3z" fill="#999"/></svg></button>
                            <button class="show-btn"><svg class="icon16" viewBox="0 0 16 16"><path d="M.5.500h12v10H.5z" fill="#fff" stroke="#7c8088"/><path d="M1 2h11" stroke="#a4b0c0"/><path d="M5.500 6.500h10v9h-10z" fill="#fff" stroke="#7c8088"/><path d="M7 9.500h7M7 11.500h7M7 13.500h7" stroke="#789" stroke-dasharray="2 1"/><path d="M1 8c0 3 1 4 4 4v-2l3 3-3 3v-2c-4 0-5-3-4-6z" fill="#2a84d4"/></svg>Show All</button>
                            <span class="tool-sep"></span>
                            <label for="groupby">Group by:</label>
                            <div class="combo group-combo">
                                <select id="groupby"><option>Area</option></select>
                                <svg class="caret" viewBox="0 0 5 3"><path d="M0 0h5L2.500 3z"/></svg>
                            </div>
                            <button class="view-btn" aria-label="View mode"><svg class="icon16" viewBox="0 0 16 16"><path d="M.5.500h15v14H.5z" fill="#f0f1f4" stroke="#888c94"/><path d="M1 1.500h14" stroke="#8494b0" stroke-width="2"/><path d="M2.500 4.500h4v3h-4zM9.500 4.500h4v3h-4zM2.500 10h4v3h-4zM9.500 10h4v3h-4z" fill="#fff" stroke="#889"/><path d="M4 6h2" stroke="#6a3"/><path d="M11 6h2" stroke="#38c"/><path d="M4 11.500h2" stroke="#44a"/><path d="M11 11.500h2" stroke="#c53"/></svg><svg class="caret" viewBox="0 0 5 3"><path d="M0 0h5L2.500 3z"/></svg></button>
                        </div>

                        <section class="group">
                            <div class="group-head"><h3>ASP.NET</h3><button aria-label="Collapse ASP.NET"><svg width="9" height="6"><path d="M1 5l3.500-3.500L8 5" class="collapse"/></svg></button></div>
                            <div class="tiles">
                                <button class="tile"><svg class="icon32"><use href="#f-auth-rules"/></svg><span>.NET<br>Authorizat...</span></button>
                                <button class="tile"><svg class="icon32"><use href="#f-compile"/></svg><span>.NET<br>Compilation</span></button>
                                <button class="tile"><svg class="icon32" viewBox="0 0 32 32"><use href="#f-404"/><text x="16.500" y="26" text-anchor="middle" class="svg-404">404</text></svg><span>.NET Error<br>Pages</span></button>
                                <button class="tile"><svg class="icon32"><use href="#f-global"/></svg><span>.NET<br>Globalization</span></button>
                                <button class="tile"><svg class="icon32"><use href="#f-profile"/></svg><span>.NET Profile</span></button>
                                <button class="tile"><svg class="icon32"><use href="#f-roles"/></svg><span>.NET Roles</span></button>
                                <button class="tile"><svg class="icon32"><use href="#f-trust"/></svg><span>.NET Trust<br>Levels</span></button>
                                <button class="tile"><svg class="icon32"><use href="#f-users"/></svg><span>.NET Users</span></button>
                                <button class="tile"><svg class="icon32"><use href="#f-appset"/></svg><span>Application<br>Settings</span></button>
                                <button class="tile"><svg class="icon32" viewBox="0 0 32 32"><use href="#f-conn"/><text x="22.500" y="25" text-anchor="middle" class="svg-ab">ab</text></svg><span>Connection<br>Strings</span></button>
                                <button class="tile"><svg class="icon32"><use href="#f-key"/></svg><span>Machine Key</span></button>
                                <button class="tile"><svg class="icon32"><use href="#f-pages"/></svg><span>Pages and<br>Controls</span></button>
                                <button class="tile"><svg class="icon32"><use href="#f-providers"/></svg><span>Providers</span></button>
                                <button class="tile"><svg class="icon32"><use href="#f-session"/></svg><span>Session State</span></button>
                                <button class="tile"><svg class="icon32"><use href="#f-smtp"/></svg><span>SMTP E-mail</span></button>
                            </div>
                        </section>

                        <section class="group">
                            <div class="group-head"><h3>IIS</h3><button aria-label="Collapse IIS"><svg width="9" height="6"><path d="M1 5l3.500-3.500L8 5" class="collapse"/></svg></button></div>
                            <div class="tiles">
                                <button class="tile"><svg class="icon32"><use href="#f-asp"/></svg><span>ASP</span></button>
                                <button class="tile"><svg class="icon32"><use href="#f-authn"/></svg><span>Authentic...</span></button>
                                <button class="tile"><svg class="icon32"><use href="#f-compress"/></svg><span>Compression</span></button>
                                <button class="tile"><svg class="icon32"><use href="#f-default"/></svg><span>Default<br>Document</span></button>
                                <button class="tile"><svg class="icon32"><use href="#f-browse"/></svg><span>Directory<br>Browsing</span></button>
                                <button class="tile"><svg class="icon32" viewBox="0 0 32 32"><use href="#f-404"/><text x="16.500" y="26" text-anchor="middle" class="svg-404">404</text></svg><span>Error Pages</span></button>
                                <button class="tile"><svg class="icon32"><use href="#f-failed"/></svg><span>Failed<br>Request Tra...</span></button>
                                <button class="tile"><svg class="icon32"><use href="#f-handler"/></svg><span>Handler<br>Mappings</span></button>
                                <button class="tile"><svg class="icon32"><use href="#f-redirect"/></svg><span>HTTP<br>Redirect</span></button>
                                <button class="tile"><svg class="icon32"><use href="#f-response"/></svg><span>HTTP<br>Respon...</span></button>
                                <button class="tile"><svg class="icon32"><use href="#f-isapi"/></svg><span>ISAPI Filters</span></button>
                                <button class="tile"><svg class="icon32"><use href="#f-logging"/></svg><span>Logging</span></button>
                                <button class="tile"><svg class="icon32"><use href="#f-mime"/></svg><span>MIME Types</span></button>
                                <button class="tile"><svg class="icon32"><use href="#f-modules"/></svg><span>Modules</span></button>
                                <button class="tile"><svg class="icon32"><use href="#f-caching"/></svg><span>Output<br>Caching</span></button>
                                <button class="tile"><svg class="icon32"><use href="#f-filter"/></svg><span>Request<br>Filtering</span></button>
                                <button class="tile"><svg class="icon32"><use href="#f-ssl"/></svg><span>SSL Settings</span></button>
                            </div>
                        </section>

                        <section class="group">
                            <div class="group-head"><h3>Management</h3><button aria-label="Collapse Management"><svg width="9" height="6"><path d="M1 5l3.500-3.500L8 5" class="collapse"/></svg></button></div>
                            <div class="tiles">
                                <div class="tile-wrap">
                                    <button class="tile tile-selected" aria-describedby="tip"><svg class="icon32"><use href="#f-config"/></svg><span>Configuratio<br>n Editor</span></button>
                                    <div class="tooltip" id="tip" role="tooltip">Provides a generic Configuration Editor</div>
                                    <div class="highlight"></div>
                                </div>
                                <button class="tile"><svg class="icon32"><use href="#f-perms"/></svg><span>IIS Manager<br>Permissions</span></button>
                            </div>
                        </section>
                    </div>
                </div>
                <div class="view-tabs">
                    <button class="tab active"><svg class="icon16" viewBox="0 0 16 16"><path d="M.5.500h15v15H.5z" fill="#fff" stroke="#888"/><path d="M1 2h14" stroke="#9aa4b4" stroke-width="2" stroke-dasharray="2 1"/><path d="M4.500 3v12M11.500 3v12" stroke="#aaa"/><path d="M6 6.500h4M6 8.500h3M6 10.500h4M6 12.500h3" stroke="#555"/></svg>Features View</button>
                    <button class="tab"><svg class="icon16" viewBox="0 0 16 16"><path d="M.5 2l4-1.500 3 1.500h5v12h-12z" fill="url(#gFolder)" stroke="#c49838" stroke-width=".8"/><path d="M3 5h11l-3 9H.5z" fill="#fbe9b0" stroke="#c49838" stroke-width=".6"/><path d="M7.500 5.500h6l2 2v8h-8z" fill="#fff" stroke="#888"/><path d="M9 9.500h5M9 11.500h5M9 13.500h5" stroke="#3a78c0"/></svg>Content View</button>
                </div>
            </main>

            <aside class="actions">
                <h2 class="pane-title">Actions</h2>
                <div class="action-list">
                    <a class="action" href="#">Open Feature</a>
                    <hr>
                    <a class="action" href="#"><svg class="icon16" viewBox="0 0 16 16"><path d="M2 1h6l1-1h5v13H2z" fill="url(#gFolder)" stroke="#c49838" stroke-width=".8"/><path d="M5 10l-4 5" stroke="#888" stroke-width="2"/><circle cx="7" cy="8" r="3.500" fill="#d4e6f4" stroke="#808890" stroke-width="1.200"/></svg>Explore</a>
                    <a class="action" href="#">Edit Permissions...</a>
                    <hr>
                    <h3 class="action">Edit Site</h3>
                    <a class="action" href="#">Bindings...</a>
                    <a class="action" href="#"><svg class="icon16" viewBox="0 0 16 16"><path d="M.5.500h14v15H.5z" fill="#f0f1f3" stroke="#808488"/><path d="M2.500 3.500h4v1h6v8h-10z" fill="#fff" stroke="#a0a4a8"/><path d="M4 7.500h1M6 7.500h5M4 9.500h1M6 9.500h5" stroke="#777"/><path d="M7 14h2M10 14h3" stroke="#28b4d8"/></svg>Basic Settings...</a>
                    <hr>
                    <a class="action" href="#">View Applications</a>
                    <a class="action" href="#">View Virtual Directories</a>
                    <hr>
                    <div class="section-head">
                        <h3>Manage Website</h3>
                        <button aria-label="Collapse Manage Website"><svg width="16" height="16"><circle cx="8" cy="8" r="7.500" fill="#eee" stroke="#888"/><path d="M5 9.500L8 6.500l3 3" fill="none" stroke="#222" stroke-width="1.600"/></svg></button>
                    </div>
                    <a class="action" href="#"><svg class="icon16" viewBox="0 0 16 16"><path d="M2 7c1-4 5-5 8-4V1l4 3.500-4 3V5.500C7 5 5 5 2 7z" fill="#54c044" stroke="#2c9428" stroke-width=".6"/><path d="M13 9c-1 4-5 5-7 4v2l-4-3.500 4-3V11c3 .5 4 0 7-2z" fill="#54c044" stroke="#2c9428" stroke-width=".6"/></svg>Restart</a>
                    <a class="action off" aria-disabled="true"><svg class="icon16" viewBox="0 0 16 16"><path d="M5 3l6 5-6 5z" fill="#a8a8a8" stroke="#888" stroke-width=".8"/></svg>Start</a>
                    <a class="action" href="#"><svg class="icon16" viewBox="0 0 16 16"><rect x="3.500" y="3" width="9.500" height="9.500" rx="1" fill="#34383c" stroke="#666"/><path d="M4.500 4h7.500v2l-7.500 4z" fill="#777" opacity=".6"/></svg>Stop</a>
                    <hr>
                    <h3 class="action">Browse Website</h3>
                    <a class="action" href="#"><svg class="icon16"><use href="#site-window"/></svg>Browse *:80 (http)</a>
                    <a class="action" href="#"><svg class="icon16"><use href="#site-window"/></svg>Browse *:443 (https)</a>
                    <hr>
                    <a class="action" href="#">Advanced Settings...</a>
                    <hr>
                    <h3 class="action">Configure</h3>
                    <a class="action" href="#">Failed Request Tracing...</a>
                    <a class="action" href="#">Limits...</a>
                    <hr>
                    <a class="action" href="#"><svg class="icon16"><use href="#help"/></svg>Help</a>
                </div>
            </aside>
        </div>

        <footer class="statusbar">
            <span>Ready</span>
            <div class="status-right">
                <svg class="icon16"><use href="#server"/></svg>
                <svg width="10" height="12"><path d="M8 1h2v2H8zM4 5h2v2H4zM8 5h2v2H8zM0 9h2v2H0zM4 9h2v2H4zM8 9h2v2H8z" fill="#a0a0a0"/></svg>
            </div>
        </footer>
    </div>

</body>
</html>
```

FILE: styles.css
```css
* {
    box-sizing: border-box;
}

body {
    margin: 0;
    font-family: "Open Sans", "Noto Sans", sans-serif;
    font-size: 12px;
    line-height: 14px;
    color: #000;
}

h1, h2, h3, ul {
    margin: 0;
    padding: 0;
    font-size: inherit;
    font-weight: normal;
}

button, input, select {
    font: inherit;
    color: inherit;
    margin: 0;
    padding: 0;
    border: none;
    background: none;
}

a {
    color: inherit;
    text-decoration: none;
}

svg {
    display: block;
    flex: none;
}

.sprite {
    position: absolute;
    width: 0;
    height: 0;
}

.icon16 {
    width: 16px;
    height: 16px;
}

.icon32 {
    width: 32px;
    height: 32px;
}

.caret {
    width: 5px;
    height: 3px;
}

.svg-404 {
    font: bold 7px "DejaVu Sans", sans-serif;
}

.svg-ab {
    font: bold 12px "Liberation Serif", serif;
    fill: #a01820;
}

/* window frame */
.window {
    display: flex;
    flex-direction: column;
    min-height: 100vh;
    padding: 0 7px 6px;
    border: 1px solid #35393c;
    background: #5fcde6;
}

.titlebar {
    display: grid;
    grid-template-columns: 1fr auto 1fr;
    align-items: center;
    height: 29px;
}

.app-icon {
    margin-left: 2px;
}

.window-title {
    font-size: 14px;
    line-height: 20px;
}

.window-buttons {
    display: flex;
    align-self: start;
    justify-self: end;
    margin-right: -2px;
    border: 1px solid #2b3a40;
    border-top: none;
}

.win-btn {
    display: flex;
    align-items: center;
    justify-content: center;
    width: 27px;
    height: 20px;
    border-right: 1px solid #2b3a40;
}

.win-close {
    width: 46px;
    border-right: none;
    background: #c25a50;
}

/* address bar */
.navbar {
    display: flex;
    align-items: center;
    height: 34px;
    padding: 0 6px 2px 4px;
    border-top: 1px solid #6f9fc0;
    background: #a3bcdf;
}

.history {
    width: 56px;
    height: 28px;
}

.address {
    display: flex;
    flex: 1;
    align-items: center;
    height: 25px;
    margin-left: 17px;
    padding: 0 0 1px 6px;
    border: 1px solid #64707a;
    background: #e6eef7;
}

.crumb-arrow {
    width: 4px;
    height: 8px;
    margin: 0 8px 0 12px;
}

.address .icon16 + .crumb-arrow {
    margin-left: 10px;
}

.nav-tools {
    display: flex;
    align-items: center;
    gap: 7px;
    margin: 0 1px 2px 6px;
}

.nav-sep {
    width: 1px;
    height: 13px;
    margin-left: 2px;
    background: #fff;
}

.help-btn {
    display: flex;
    align-items: center;
    gap: 6px;
    margin-left: -4px;
}

.menubar {
    display: flex;
    gap: 18px;
    height: 24px;
    padding-left: 15px;
    background: linear-gradient(#fff 5px, #f7f7f7 5px 18px, #eeeef5 18px 19px, #eee 19px);
}

/* three panes */
.workspace {
    display: flex;
    flex: 1;
    gap: 6px;
    padding: 1px;
    background: #e5e5e5;
}

.connections {
    display: flex;
    flex-direction: column;
    width: 256px;
    border: 1px solid #a0a0a0;
    background: #fff;
}

.pane-title {
    height: 23px;
    padding: 4px 7px;
    background: #a4a4a4;
    font-weight: bold;
    line-height: 15px;
}

.conn-tools {
    display: flex;
    align-items: center;
    gap: 7px;
    height: 25px;
    padding-left: 2px;
    border-bottom: 1px solid #a0a0a0;
    background: linear-gradient(#fff 7px, #f7f7f7 7px 20px, #eeeef5 20px);
}

.connect-btn {
    display: flex;
    align-items: center;
    gap: 2px;
}

.tool-sep {
    width: 1px;
    height: 15px;
    margin-right: -2px;
    background: #a0a0a0;
}

.tree {
    flex: 1;
    list-style: none;
}

.tree-row {
    display: flex;
    height: 18px;
}

.level1 {
    padding-left: 7px;
}

.level2 {
    padding-left: 26px;
}

.level3 {
    padding-left: 45px;
}

.branch {
    width: 13px;
    height: 18px;
}

.dots {
    fill: none;
    stroke: #808080;
    stroke-dasharray: 1 1;
}

.expander {
    fill: #555;
    stroke: #222;
}

.node {
    display: flex;
    align-items: center;
    gap: 5px;
    padding: 0 3px 0 1px;
    border: 1px solid transparent;
    white-space: nowrap;
}

.selected {
    border-color: #d8d8d8;
    background: #f0f0f0;
}

.scrollbar {
    display: flex;
    height: 18px;
    border: 1px solid #a0a0a0;
    border-width: 1px 0;
}

.scrollbar button {
    display: flex;
    align-items: center;
    justify-content: center;
    width: 17px;
}

.chev {
    fill: none;
    stroke: #555;
    stroke-width: 1.500;
}

.track {
    display: flex;
    flex: 1;
    border: 1px solid #a0a0a0;
    border-width: 0 1px;
}

.thumb {
    display: flex;
    align-items: center;
    justify-content: center;
    gap: 1px;
    width: 96%;
    border-right: 1px solid #a0a0a0;
    background: #dcdcdc;
}

.thumb span {
    width: 2px;
    height: 7px;
    background: #666;
}

/* features */
.center {
    display: flex;
    flex: 1;
    flex-direction: column;
}

.feature-page {
    display: flex;
    flex: 1;
    flex-direction: column;
    padding: 12px;
    border: 1px solid #a0a0a0;
    background: #fff;
}

.page-head {
    display: flex;
    gap: 18px;
    height: 39px;
}

.page-head h2 {
    font-size: 18px;
    line-height: 26px;
}

.feature-box {
    flex: 1;
    border: 1px solid #ececec;
}

.filter-bar {
    display: flex;
    align-items: center;
    height: 25px;
    padding-left: 7px;
    border-bottom: 1px solid #a0a0a0;
    background: linear-gradient(#fff 7px, #f7f7f7 7px 20px, #eeeef5 20px);
}

.combo {
    display: flex;
    align-items: center;
    height: 24px;
    background: #fff;
}

.combo input, .combo select {
    flex: 1;
    min-width: 0;
    appearance: none;
    outline: none;
}

.filter-combo {
    width: 121px;
    margin-left: 6px;
    padding-right: 7px;
}

.group-combo {
    width: 113px;
    margin-left: 3px;
    padding: 0 5px 0 4px;
}

.filter-bar button {
    display: flex;
    align-items: center;
}

.go-btn {
    gap: 2px;
    margin-left: 4px;
    color: #848484;
}

.go-btn .caret {
    margin-left: 5px;
}

.show-btn {
    gap: 2px;
    margin-left: 5px;
}

.filter-bar .tool-sep {
    margin: 0 4px 0 7px;
}

.view-btn {
    gap: 3px;
    margin-left: 2px;
}

.group {
    margin-bottom: 8px;
}

.group-head {
    display: flex;
    align-items: center;
    height: 20px;
    margin-bottom: 1px;
    padding: 0 8px 0 12px;
    color: #1e3c9c;
}

.group-head::after {
    flex: 1;
    order: 1;
    height: 1px;
    margin: 0 8px 0 5px;
    background: #dce6f4;
    content: "";
}

.group-head button {
    order: 2;
}

.collapse {
    fill: none;
    stroke: #222;
    stroke-width: 1.500;
}

.tiles {
    display: grid;
    grid-template-columns: repeat(auto-fill, 74px);
    gap: 5px 1px;
    padding-right: 20px;
}

.tile {
    display: flex;
    flex-direction: column;
    align-items: center;
    gap: 3px;
    width: 74px;
    height: 70px;
    padding: 2px 0;
    line-height: 15px;
    text-align: center;
    white-space: nowrap;
}

.tile-wrap {
    position: relative;
}

.tile-selected {
    padding: 1px 0;
    border: 1px solid #7fb4e4;
    outline: 1px dotted #222;
    outline-offset: -2px;
    background: #cbe5fd;
}

.tooltip {
    position: absolute;
    top: 72px;
    left: 45px;
    padding: 2px 5px;
    border: 1px solid #767676;
    background: #eeeef6;
    color: #575757;
    white-space: nowrap;
}

.highlight {
    position: absolute;
    inset: -10px -5px;
    border: 4px solid #fa0a3c;
    border-radius: 1px;
}

.view-tabs {
    display: flex;
    gap: 1px;
    height: 27px;
    padding: 3px 6px 4px;
}

.tab {
    display: flex;
    align-items: center;
    gap: 2px;
    padding: 0 3px 0 1px;
    border: 1px solid transparent;
}

.active {
    border-color: #3399ff;
    background: #fff;
}

/* actions */
.actions {
    width: 200px;
    border: 1px solid #a0a0a0;
    background: linear-gradient(to right, #fff 18%, #f7f7f7 18% 42%, #eeeef6 42% 45%, #eee 45% 74%, #e5e5e5 74%);
}

.action-list {
    padding: 5px 3px 0 0;
}

.action {
    display: flex;
    align-items: center;
    height: 20px;
    padding-left: 29px;
    color: #1464c8;
    white-space: nowrap;
}

.action .icon16 {
    margin: 0 8px 0 -24px;
}

h3.action, .section-head h3 {
    color: #000;
    font-weight: bold;
}

.off {
    color: #a0a0a0;
}

.actions hr {
    height: 1px;
    margin: 1px 0 3px 3px;
    border: none;
    background: linear-gradient(to right, transparent, #888 30%);
}

.section-head {
    display: flex;
    align-items: center;
    justify-content: space-between;
    height: 23px;
    margin-bottom: 2px;
    padding: 0 9px 0 7px;
    background: linear-gradient(#eee 6px, #f7f7f7 6px 18px, #fff 18px);
}

.section-head button {
    display: flex;
}

.statusbar {
    display: flex;
    align-items: center;
    justify-content: space-between;
    height: 24px;
    padding: 0 2px 0 5px;
    border-top: 1px solid #fff;
    border-bottom: 1px solid #8fb4c0;
    background: linear-gradient(to right, #eee 197px, #eeeef8 197px 22%, #f7f7f7 22% 72%, #fff 72%);
}

.status-right {
    display: flex;
    align-items: center;
}
```
